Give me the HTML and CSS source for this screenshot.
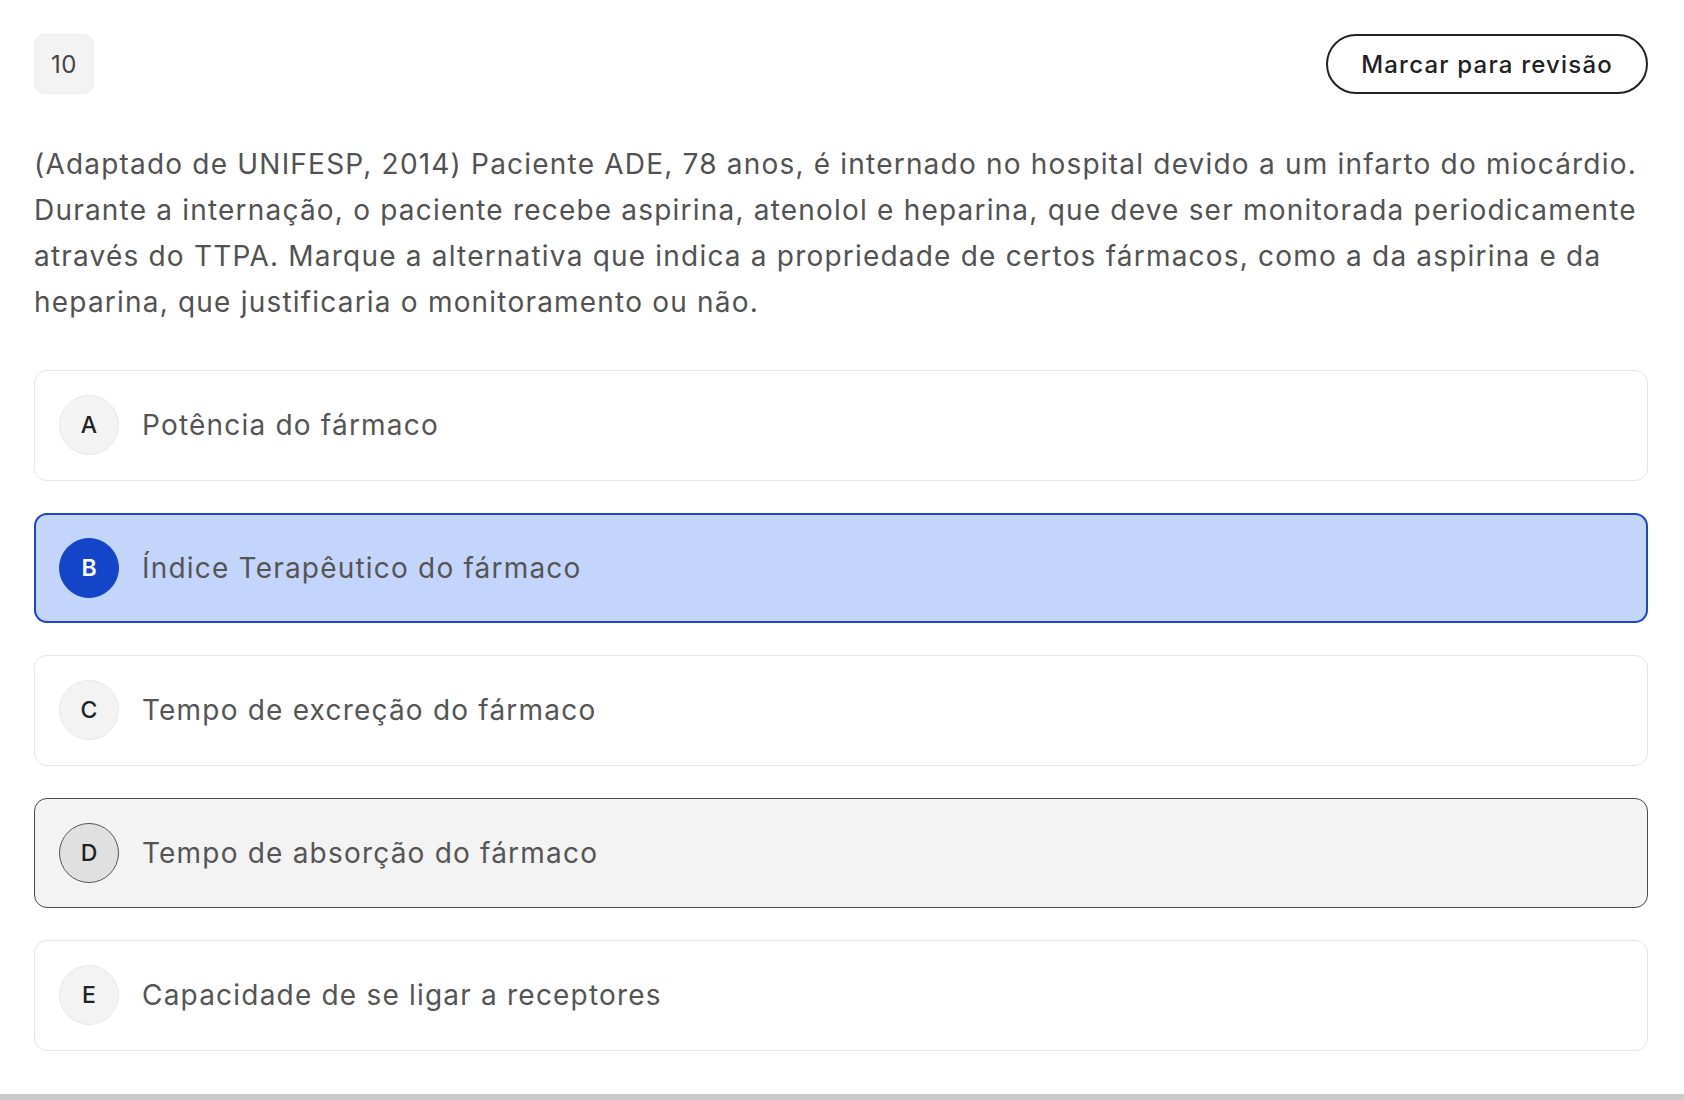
FILE: index.html
```html
<!DOCTYPE html>
<html lang="pt-BR">
<head>
<meta charset="utf-8">
<title>Questão 10</title>
<link rel="stylesheet" href="styles.css">
</head>
<body>
<main class="page">
  <header class="q-header">
    <span class="q-number">10</span>
    <button class="review-btn">Marcar para revisão</button>
  </header>
  <p class="q-text">(Adaptado de UNIFESP, 2014) Paciente ADE, 78 anos, é internado no hospital devido a um infarto do miocárdio. Durante a internação, o paciente recebe aspirina, atenolol e heparina, que deve ser monitorada periodicamente através do TTPA. Marque a alternativa que indica a propriedade de certos fármacos, como a da aspirina e da heparina, que justificaria o monitoramento ou não.</p>
  <ul class="options">
    <li class="option"><span class="letter">A</span><span class="opt-text">Potência do fármaco</span></li>
    <li class="option selected"><span class="letter">B</span><span class="opt-text">Índice Terapêutico do fármaco</span></li>
    <li class="option"><span class="letter">C</span><span class="opt-text">Tempo de excreção do fármaco</span></li>
    <li class="option hovered"><span class="letter">D</span><span class="opt-text">Tempo de absorção do fármaco</span></li>
    <li class="option"><span class="letter">E</span><span class="opt-text">Capacidade de se ligar a receptores</span></li>
  </ul>
</main>
<div class="bottom-bar"></div>
</body>
</html>
```

FILE: styles.css
```css
* { box-sizing: border-box; }
html, body { margin: 0; padding: 0; background: #fff; }
body {
  font-family: Inter, "Noto Sans", "Liberation Sans", sans-serif;
  color: #555;
  height: 1100px;
  display: flex;
  flex-direction: column;
  overflow: hidden;
}
.page {
  flex: 1;
  padding: 34px 36px 0 34px;
}
.q-header {
  display: flex;
  justify-content: space-between;
  align-items: center;
}
.q-number {
  width: 60px;
  height: 60px;
  display: flex;
  align-items: center;
  justify-content: center;
  background: #f3f3f3;
  border: 1px solid #ececec;
  border-radius: 10px;
  font-size: 24px;
  letter-spacing: 0.5px;
  color: #444;
}
.review-btn {
  height: 60px;
  padding: 0 33px;
  border: 2px solid #222;
  border-radius: 30px;
  background: #fff;
  font-family: inherit;
  font-size: 24px;
  font-weight: 500;
  letter-spacing: 1.2px;
  color: #222;
}
.q-text {
  margin: 47px 0 0 0;
  font-size: 28px;
  letter-spacing: 1.2px;
  line-height: 46px;
  color: #525252;
}
.options {
  list-style: none;
  margin: 45px 0 0 0;
  padding: 0;
  display: flex;
  flex-direction: column;
  gap: 32px;
}
.option {
  height: 110.5px;
  display: flex;
  align-items: center;
  gap: 23px;
  padding-left: 24px;
  border: 1.5px solid #e6e6e6;
  border-radius: 13px;
  background: #fff;
}
.letter {
  width: 60px;
  height: 60px;
  flex: none;
  display: flex;
  align-items: center;
  justify-content: center;
  border-radius: 50%;
  background: #f3f3f3;
  border: 1px solid #e8e8e8;
  font-size: 23px;
  font-weight: 500;
  color: #222;
}
.opt-text {
  font-size: 28px;
  letter-spacing: 1.2px;
  color: #555;
}
.option.selected {
  background: #c4d5fc;
  border: 2.5px solid #1b46c6;
  padding-left: 23px;
}
.option.selected .letter {
  background: #1444c8;
  border-color: #1444c8;
  color: #fff;
  font-weight: 600;
}
.option.hovered {
  background: #f3f3f3;
  border: 1.5px solid #4a4a4a;
}
.option.hovered .letter {
  background: #e0e0e0;
  border: 1.5px solid #555;
}
.bottom-bar {
  height: 6px;
  flex: none;
  background: #cbcbcb;
}
```
